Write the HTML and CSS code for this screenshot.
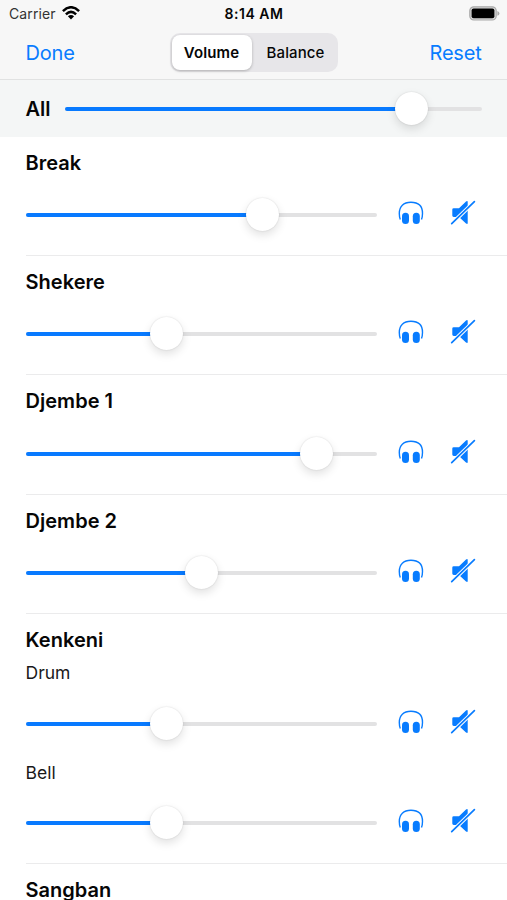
FILE: index.html
```
<!DOCTYPE html>
<html lang="en">
<head>
<meta charset="utf-8">
<title>Mixer</title>
<link rel="stylesheet" href="styles.css">
</head>
<body>
<svg class="defs" aria-hidden="true">
  <symbol id="headphones" viewBox="0 0 26 26">
    <path d="M2.3 19.4C1.5 17.2 1.3 15.5 1.3 13.4C1.3 6.2 5.5 2.3 12.9 2.3S24.5 6.2 24.5 13.4C24.5 15.5 24.3 17.2 23.5 19.4" fill="none" stroke="currentColor" stroke-width="1.4"/>
    <rect x="4" y="12.8" width="7" height="11.2" rx="3.5" fill="currentColor"/>
    <rect x="14.8" y="12.8" width="7" height="11.2" rx="3.5" fill="currentColor"/>
  </symbol>
  <symbol id="mute" viewBox="0 0 26 26">
    <path d="M2.3 9.6Q2.3 8.2 3.7 8.2H9L16 1.4Q17.7 .3 17.7 2V23Q17.7 24.8 16 23.6L9 16.9H3.7Q2.3 16.9 2.3 15.5Z" fill="currentColor"/>
    <path d="M1.5 23.8L24.6 1.5" stroke="#fff" stroke-width="3.8"/>
    <path d="M1.7 23.6L24.4 1.7" stroke="currentColor" stroke-width="1.7" stroke-linecap="round"/>
  </symbol>
</svg>
<header class="top">
  <div class="status">
    <div class="carrier"><span class="carrier-name">Carrier</span>
      <svg class="wifi" viewBox="0 0 18 14"><g fill="none" stroke="#000" stroke-width="2.5"><path d="M.9 5.1Q9-2.6 17.1 5.1"/><path d="M3.9 8.3Q9 3.5 14.1 8.3"/></g><path d="M5.9 10.3Q9 7.7 12.1 10.3L9 13.6Z"/></svg>
    </div>
    <span class="clock">8:14 AM</span>
    <svg class="battery" viewBox="0 0 31 15"><rect x=".8" y=".8" width="26.4" height="13.2" rx="4" fill="#d8d8d8" stroke="#a9a9a9" stroke-width="1.2"/><rect x="2.6" y="2.6" width="22.8" height="9.6" rx="2"/><path d="M28.4 5Q30.4 5.6 30.4 7.4T28.4 9.8Z" fill="#aaa"/></svg>
  </div>
  <nav class="bar">
    <span class="link done">Done</span>
    <div class="segments"><span class="segment selected">Volume</span><span class="segment">Balance</span></div>
    <span class="link reset">Reset</span>
  </nav>
</header>
<section class="master">
  <span class="master-name">All</span>
  <div class="slider"><div class="fill" style="width:83%"></div><div class="thumb" style="left:83%"></div></div>
</section>
<main>
  <section class="track">
    <h2>Break</h2>
    <div class="control"><div class="slider"><div class="fill" style="width:67.5%"></div><div class="thumb" style="left:67.5%"></div></div><svg class="icon"><use href="#headphones"/></svg><svg class="icon mute"><use href="#mute"/></svg></div>
  </section>
  <section class="track">
    <h2>Shekere</h2>
    <div class="control"><div class="slider"><div class="fill" style="width:40.1%"></div><div class="thumb" style="left:40.1%"></div></div><svg class="icon"><use href="#headphones"/></svg><svg class="icon mute"><use href="#mute"/></svg></div>
  </section>
  <section class="track">
    <h2>Djembe 1</h2>
    <div class="control"><div class="slider"><div class="fill" style="width:82.8%"></div><div class="thumb" style="left:82.8%"></div></div><svg class="icon"><use href="#headphones"/></svg><svg class="icon mute"><use href="#mute"/></svg></div>
  </section>
  <section class="track">
    <h2>Djembe 2</h2>
    <div class="control"><div class="slider"><div class="fill" style="width:50.2%"></div><div class="thumb" style="left:50.2%"></div></div><svg class="icon"><use href="#headphones"/></svg><svg class="icon mute"><use href="#mute"/></svg></div>
  </section>
  <section class="track group">
    <h2>Kenkeni</h2>
    <h3>Drum</h3>
    <div class="control"><div class="slider"><div class="fill" style="width:40.1%"></div><div class="thumb" style="left:40.1%"></div></div><svg class="icon"><use href="#headphones"/></svg><svg class="icon mute"><use href="#mute"/></svg></div>
    <h3>Bell</h3>
    <div class="control"><div class="slider"><div class="fill" style="width:40.1%"></div><div class="thumb" style="left:40.1%"></div></div><svg class="icon"><use href="#headphones"/></svg><svg class="icon mute"><use href="#mute"/></svg></div>
  </section>
  <section class="track last">
    <h2>Sangban</h2>
  </section>
</main>
</body>
</html>
```
FILE: styles.css
```
* { box-sizing: border-box; }
html, body { margin: 0; height: 900px; overflow: hidden; }
body { width: 507px; background: #fff; color: #060606; font-family: Inter, "Liberation Sans", sans-serif; display: flex; flex-direction: column; }
.defs { display: none; }
svg { display: block; flex: none; }
.top { flex: none; height: 79.5px; background: #f7f7f7; border-bottom: 1.5px solid #e1e2e2; }
.status { height: 27px; display: grid; grid-template-columns: 1fr auto 1fr; align-items: center; padding: 0 7px 0 9px; }
.carrier { display: flex; align-items: center; gap: 6px; font-size: 14px; letter-spacing: .1px; color: #333; }
.wifi { width: 18px; height: 14px; margin-top: -2px; }
.clock { font-size: 14px; font-weight: 600; letter-spacing: .5px; margin-right: 1px; }
.battery { width: 31px; height: 15px; justify-self: end; }
.bar { height: 51px; display: grid; grid-template-columns: 1fr 168px 1fr; align-items: center; padding: 0 25.5px; }
.link { color: #087cff; font-size: 20px; letter-spacing: -.2px; }
.reset { justify-self: end; }
.segments { height: 39px; border-radius: 10px; background: #e7e6e9; display: grid; grid-template-columns: 82px 84px; padding: 2px 0 2px 2px; }
.segment { display: flex; align-items: center; justify-content: center; font-size: 15px; font-weight: 500; letter-spacing: .1px; }
.selected { width: 80px; background: #fff; border-radius: 8px; font-weight: 600; box-shadow: 0 1px 3px rgba(0,0,0,.25); }
.master { flex: none; height: 57px; background: #f4f6f6; padding: 1px 25px 0 25.5px; display: flex; align-items: center; }
.master-name { width: 39.5px; font-size: 20px; font-weight: 600; }
.slider { position: relative; flex: 1; height: 4px; border-radius: 2px; background: #e2e2e3; }
.fill { height: 4px; border-radius: 2px; background: #087aff; }
.thumb { position: absolute; top: 2px; width: 33px; height: 33px; margin: -17px 0 0 -16.5px; border-radius: 50%; background: #fff; box-shadow: 0 0 1.5px rgba(0,0,0,.16), 0 4px 10px rgba(0,0,0,.12); }
.track { height: 119.4px; margin-left: 25.5px; border-bottom: 1.4px solid #ebebec; display: flex; flex-direction: column; }
h2 { margin: 14px 0 0; height: 25px; line-height: 25px; font-size: 20px; font-weight: 600; letter-spacing: .03px; }
h3 { margin: 0; height: 24px; line-height: 24px; font-size: 17.5px; font-weight: 400; letter-spacing: 0; color: #191919; }
.control { height: 34px; margin-top: 22.5px; margin-right: 31px; display: flex; align-items: center; color: #087cff; }
.icon { width: 26px; height: 26px; margin: -4px 0 0 21px; }
.icon.mute { margin-left: 26px; }
.group { height: 249.8px; }
.group h2 + h3 { margin-top: 8px; }
.group .control { margin-top: 21.5px; }
.group .control + h3 { margin-top: 20px; }
.group .control + h3 + .control { margin-top: 21px; }
.last { height: 36px; border-bottom: 0; }
.last h2 { margin-top: 14px; height: 22px; }
```
